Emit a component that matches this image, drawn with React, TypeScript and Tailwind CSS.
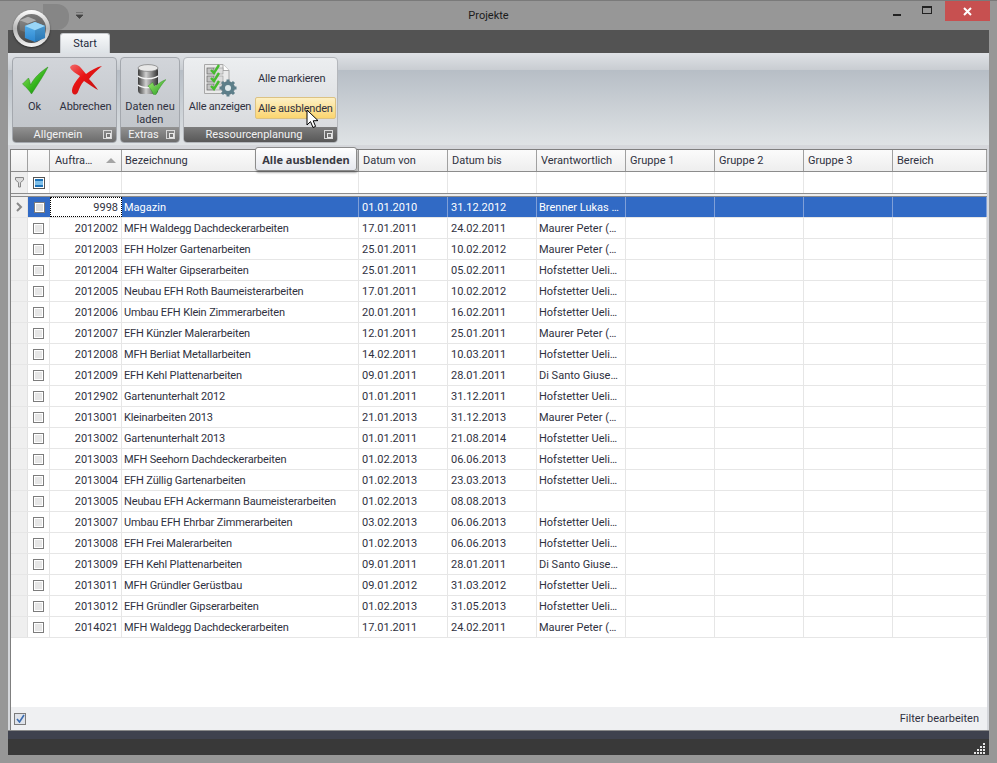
import React from 'react'

const rows = [
  ['2012002', 'MFH Waldegg Dachdeckerarbeiten', '17.01.2011', '24.02.2011', 'Maurer Peter (…'],
  ['2012003', 'EFH Holzer Gartenarbeiten', '25.01.2011', '10.02.2012', 'Maurer Peter (…'],
  ['2012004', 'EFH Walter Gipserarbeiten', '25.01.2011', '05.02.2011', 'Hofstetter Ueli…'],
  ['2012005', 'Neubau EFH Roth Baumeisterarbeiten', '17.01.2011', '10.02.2012', 'Hofstetter Ueli…'],
  ['2012006', 'Umbau EFH Klein Zimmerarbeiten', '20.01.2011', '16.02.2011', 'Hofstetter Ueli…'],
  ['2012007', 'EFH Künzler Malerarbeiten', '12.01.2011', '25.01.2011', 'Maurer Peter (…'],
  ['2012008', 'MFH Berliat Metallarbeiten', '14.02.2011', '10.03.2011', 'Hofstetter Ueli…'],
  ['2012009', 'EFH Kehl Plattenarbeiten', '09.01.2011', '28.01.2011', 'Di Santo Giuse…'],
  ['2012902', 'Gartenunterhalt 2012', '01.01.2011', '31.12.2011', 'Hofstetter Ueli…'],
  ['2013001', 'Kleinarbeiten 2013', '21.01.2013', '31.12.2013', 'Maurer Peter (…'],
  ['2013002', 'Gartenunterhalt 2013', '01.01.2011', '21.08.2014', 'Hofstetter Ueli…'],
  ['2013003', 'MFH Seehorn Dachdeckerarbeiten', '01.02.2013', '06.06.2013', 'Hofstetter Ueli…'],
  ['2013004', 'EFH Züllig Gartenarbeiten', '01.02.2013', '23.03.2013', 'Hofstetter Ueli…'],
  ['2013005', 'Neubau EFH Ackermann Baumeisterarbeiten', '01.02.2013', '08.08.2013', ''],
  ['2013007', 'Umbau EFH Ehrbar Zimmerarbeiten', '03.02.2013', '06.06.2013', 'Hofstetter Ueli…'],
  ['2013008', 'EFH Frei Malerarbeiten', '01.02.2013', '06.06.2013', 'Hofstetter Ueli…'],
  ['2013009', 'EFH Kehl Plattenarbeiten', '09.01.2011', '28.01.2011', 'Di Santo Giuse…'],
  ['2013011', 'MFH Gründler Gerüstbau', '09.01.2012', '31.03.2012', 'Hofstetter Ueli…'],
  ['2013012', 'EFH Gründler Gipserarbeiten', '01.02.2013', '31.05.2013', 'Hofstetter Ueli…'],
  ['2014021', 'MFH Waldegg Dachdeckerarbeiten', '17.01.2011', '24.02.2011', 'Maurer Peter (…'],
]

const gridCols = 'grid grid-cols-[17px_22px_72px_237px_89px_89px_89px_89px_89px_89px_94px]'

function DialogLauncher() {
  return (
    <span className="relative h-[9px] w-[9px] border border-[#d8d8d8]">
      <span className="absolute bottom-0 right-0 h-[5px] w-[5px] border border-[#e8e8e8] bg-[#777]" />
    </span>
  )
}

function RibbonGroup({ title, width, hot, children }: { title: string; width: string; hot?: boolean; children: React.ReactNode }) {
  return (
    <div
      className={`${width} flex flex-col overflow-hidden rounded-[4px] border ${
        hot ? 'border-[#b4b7bc] bg-gradient-to-b from-[#eceef0] to-[#d5d7da]' : 'border-[#a4a8ae] bg-gradient-to-b from-[#d2d5da] to-[#bfc3c8]'
      }`}
    >
      <div className="flex flex-1">{children}</div>
      <div
        className={`flex h-[15px] items-center pr-[4px] text-[#f2f2f2] bg-gradient-to-b ${
          hot ? 'from-[#7c7c7c] to-[#585858]' : 'from-[#929292] to-[#6c6c6c]'
        }`}
      >
        <span className="flex-1 text-center">{title}</span>
        <DialogLauncher />
      </div>
    </div>
  )
}

function CheckMark() {
  return (
    <svg width="34" height="34" viewBox="0 0 34 34" className="ml-[4px]">
      <defs>
        <linearGradient id="tick" x1="0" x2="1" y1="0" y2="1">
          <stop offset="0" stopColor="#9be86a" />
          <stop offset="0.55" stopColor="#35b51c" />
          <stop offset="1" stopColor="#0e7a10" />
        </linearGradient>
      </defs>
      <path d="M2.5 21 L8.5 15 C9.5 17 10 19 10.5 22 C14 15 20 9 28 4 C24 12 18 21 11.5 31 C9 27 6 24 2.5 21Z" fill="url(#tick)" stroke="#2a8a1c" strokeWidth="0.5" />
    </svg>
  )
}

function CrossMark() {
  return (
    <svg width="36" height="34" viewBox="0 0 36 34">
      <defs>
        <linearGradient id="cross" x1="0" x2="1" y1="0" y2="1">
          <stop offset="0" stopColor="#f26a6a" />
          <stop offset="0.4" stopColor="#e81414" />
          <stop offset="1" stopColor="#b80f0f" />
        </linearGradient>
      </defs>
      <path d="M2 4 C5 0 10 1 13 5 L18 11 C23 7 29 4 34 3 C29 7 24 12 21 16 C25 20 28 24 30 27 C26 25 21 21 16 18 C13 21 11 26 10 29 C8 33 4 32 4 28 C4 23 8 18 12 13 C8 10 3 8 2 4Z" fill="url(#cross)" />
    </svg>
  )
}

function DatabaseIcon() {
  return (
    <svg width="32" height="34" viewBox="0 0 32 34">
      <defs>
        <linearGradient id="db" x1="0" x2="1" y1="0" y2="0">
          <stop offset="0" stopColor="#3c3c3c" />
          <stop offset="0.4" stopColor="#d0d0d0" />
          <stop offset="1" stopColor="#333" />
        </linearGradient>
        <linearGradient id="dbtick" x1="0" x2="1" y1="0" y2="1">
          <stop offset="0" stopColor="#a4ea70" />
          <stop offset="1" stopColor="#1f9a1f" />
        </linearGradient>
      </defs>
      <rect x="4" y="4" width="20" height="27" rx="4" fill="url(#db)" />
      <ellipse cx="14" cy="5" rx="10" ry="3.4" fill="#e8e8e8" stroke="#666" strokeWidth="0.6" />
      <path d="M4 13 C8 16.5 20 16.5 24 13 M4 22 C8 25.5 20 25.5 24 22" fill="none" stroke="#f4f4f4" strokeWidth="1.4" />
      <path d="M14 23 L18.5 19.5 L21 24 C24 20.5 28 18 32 16.5 C28 21 24.5 26 22 31.5 L19.5 31.5 C18 28 16 25 14 23Z" fill="url(#dbtick)" stroke="#2a8a1c" strokeWidth="0.4" />
    </svg>
  )
}

function ChecklistIcon() {
  return (
    <svg width="34" height="34" viewBox="0 0 34 34">
      <path d="M1.5 1.5 H20 L26 7.5 V30.5 H1.5Z" fill="#eaeaea" stroke="#a8a8a8" />
      <path d="M20 1.5 V7.5 H26" fill="#fff" stroke="#a8a8a8" />
      {[5, 13, 21].map((y) => (
        <g key={y}>
          <rect x="4" y={y} width="7" height="6" fill="#c4c4c4" stroke="#666" strokeWidth="0.7" />
          <rect x="11" y={y} width="9" height="6" fill="#dcdcdc" stroke="#888" strokeWidth="0.5" />
          <path d={`M8 ${y + 2} l3 3 l5 -8`} fill="none" stroke="#45bb2e" strokeWidth="2.4" />
        </g>
      ))}
      <g transform="translate(25 25)">
        <circle r="6.5" fill="#5d7f8a" stroke="#3b5560" strokeWidth="0.5" />
        <path d="M0 -8.5 V8.5 M-8.5 0 H8.5 M-6 -6 L6 6 M-6 6 L6 -6" stroke="#5d7f8a" strokeWidth="3" />
        <circle r="3" fill="#dfe9ec" />
      </g>
    </svg>
  )
}

function CursorIcon() {
  return (
    <svg width="14" height="20" viewBox="0 0 14 20" className="absolute left-[306px] top-[109px]">
      <path d="M1 1 V16 L4.5 12.6 L7 18.5 L9.6 17.4 L7.2 11.8 L12 11.6Z" fill="#fff" stroke="#000" strokeWidth="1" />
    </svg>
  )
}

function Cube({ className, id, side, top }: { className: string; id: string; side: [string, string]; top: string }) {
  return (
    <svg viewBox="0 0 24 24" className={className}>
      <defs>
        <linearGradient id={id} x1="0" x2="0" y1="0" y2="1">
          <stop offset="0" stopColor={side[0]} />
          <stop offset="1" stopColor={side[1]} />
        </linearGradient>
      </defs>
      <path d="M12 1 L23 5.5 V18.5 L12 23 L1 18.5 V5.5Z" fill={`url(#${id})`} />
      <path d="M12 1 L23 5.5 L12 10 L1 5.5Z" fill={top} />
      <path d="M12 10 L23 5.5 V18.5 L12 23Z" fill="#000" opacity="0.12" />
    </svg>
  )
}

function GridCheckbox({ tone = 'bg-[#e6e6e6]' }: { tone?: string }) {
  return <span className={`h-[11px] w-[11px] border border-[#7c7c7c] ${tone} shadow-[inset_0_0_0_1px_#fff]`} />
}

export default function App() {
  return (
    <div
      className="relative flex h-[763px] w-[997px] flex-col overflow-hidden whitespace-nowrap bg-[#979797] text-[11px] leading-[13px] text-[#2f3140]"
      style={{ fontFamily: 'Roboto, "Noto Sans", sans-serif' }}
    >
      {/* titlebar */}
      <div className="relative flex h-[30px] items-center justify-center border-t border-[#7a7a7a] pr-[20px] text-[#1b1b1b]">
        <span>Projekte</span>
        <div className="absolute right-[7px] top-0 flex h-[20px] items-start">
          <div className="flex h-[20px] w-[30px] items-end justify-center pb-[5px]">
            <span className="h-[2px] w-[8px] bg-[#222]" />
          </div>
          <div className="flex h-[20px] w-[30px] items-center justify-center pb-[2px]">
            <span className="h-[8px] w-[10px] border border-t-[2px] border-[#222]" />
          </div>
          <div className="ml-[3px] flex h-[20px] w-[45px] items-center justify-center bg-[#c75050]">
            <svg width="9" height="9" viewBox="0 0 9 9">
              <path d="M1 1 L8 8 M8 1 L1 8" stroke="#fff" strokeWidth="2" />
            </svg>
          </div>
        </div>
        <div className="absolute left-[43px] top-[3px] h-[26px] w-[26px] rounded-r-[12px] bg-[#868686]" />
        <svg width="7" height="7" viewBox="0 0 7 7" className="absolute left-[76px] top-[11px]">
          <path d="M0 0 H7 M0 3 H7 L3.5 6.5Z" fill="#444" stroke="#444" strokeWidth="0.8" />
        </svg>
      </div>

      <div className="mx-[8px] flex flex-1 flex-col">
        {/* tab strip */}
        <div className="flex h-[23px] items-end bg-[#535353] pl-[52px]">
          <div className="flex h-[20px] w-[50px] items-center justify-center rounded-t-[3px] border border-b-0 border-[#c5c8cc] bg-gradient-to-b from-[#f8f9fa] to-[#dde2e6] text-[#1e2a3a]">
            Start
          </div>
        </div>

        {/* ribbon */}
        <div className="flex h-[92px] gap-[3px] bg-[linear-gradient(#dfe2e6_0%,#c9cdd2_18%,#b7bec6_19%,#dfe3e5_100%)] px-[4px] pb-[2px] pt-[4px]">
          <RibbonGroup title="Allgemein" width="w-[105px]">
            <div className="flex flex-1 pt-[5px] tracking-[-0.1px]">
              <div className="flex w-[43px] flex-col items-center gap-[3px]">
                <CheckMark />
                <span>Ok</span>
              </div>
              <div className="flex w-[59px] flex-col items-center gap-[3px]">
                <CrossMark />
                <span>Abbrechen</span>
              </div>
            </div>
          </RibbonGroup>
          <RibbonGroup title="Extras" width="w-[60px]">
            <div className="flex flex-1 flex-col items-center pt-[5px] text-center">
              <DatabaseIcon />
              <span className="mt-[3px]">Daten neu</span>
              <span>laden</span>
            </div>
          </RibbonGroup>
          <RibbonGroup title="Ressourcenplanung" width="w-[155px]" hot>
            <div className="flex flex-1 pl-[3px] pt-[5px] tracking-[-0.2px]">
              <div className="flex w-[66px] flex-col items-center gap-[3px]">
                <ChecklistIcon />
                <span>Alle anzeigen</span>
              </div>
              <div className="flex flex-1 flex-col gap-[8px] pt-[4px]">
                <div className="flex h-[22px] items-center pl-[5px]">Alle markieren</div>
                <div className="ml-[2px] flex h-[22px] w-[81px] items-center rounded-[2px] border border-[#dcc283] bg-gradient-to-b from-[#fdf0c4] to-[#fbd56e] pl-[2px]">
                  Alle ausblenden
                </div>
              </div>
            </div>
          </RibbonGroup>
        </div>

        {/* grid */}
        <div className="flex flex-1 flex-col bg-[#d5d7db] pt-[4px]">
          <div className="mx-[2px] flex flex-1 flex-col border-l border-t border-[#7f7f7f] bg-white">
            <div className={`${gridCols} h-[22px] border-b border-[#8c8c8c] bg-gradient-to-b from-[#fbfbfb] to-[#eeeeee]`}>
              <div className="border-r border-[#a0a0a0]" />
              <div className="border-r border-[#a0a0a0]" />
              <div className="flex items-center justify-between border-r border-[#a0a0a0] px-[5px]">
                <span>Auftra…</span>
                <span className="h-0 w-0 border-x-[5px] border-b-[5px] border-x-transparent border-b-[#a5a5a5]" />
              </div>
              {['Bezeichnung', 'Datum von', 'Datum bis', 'Verantwortlich', 'Gruppe 1', 'Gruppe 2', 'Gruppe 3', 'Bereich'].map((h, i) => (
                <div key={h} className={`flex items-center border-r border-[#a0a0a0] ${i === 0 ? 'pl-[3px]' : 'pl-[4px]'}`}>
                  {h}
                </div>
              ))}
            </div>
            <div className={`${gridCols} h-[21px]`}>
              <div className="flex items-center justify-center border-r border-[#e2e2e2] bg-[#efefef]">
                <svg width="9" height="11" viewBox="0 0 9 11">
                  <path d="M0.5 0.5 H8.5 V3 L5.5 5.5 V10 H3.5 V5.5 L0.5 3Z" fill="#ddd" stroke="#888" />
                </svg>
              </div>
              <div className="flex items-center justify-center border-r border-[#e6e6e6]">
                <span className="flex h-[12px] w-[12px] items-center justify-center border border-[#555] bg-white">
                  <span className="h-[8px] w-[8px] border-y-[2px] border-[#1e73b8] bg-[#7fc0ea]" />
                </span>
              </div>
              {Array.from({ length: 9 }).map((_, i) => (
                <div key={i} className="border-r border-[#e6e6e6]" />
              ))}
            </div>
            <div className="h-[4px] border-y border-[#8c8c8c] bg-[#ececec]" />

            <div className={`${gridCols} h-[21px] border-b border-[#e6e6e6]`}>
              <div className="flex items-center justify-center border-r border-[#e2e2e2] bg-[#efefef]">
                <svg width="7" height="10" viewBox="0 0 7 10">
                  <path d="M1 1 L5 5 L1 9" fill="none" stroke="#888" strokeWidth="2" />
                </svg>
              </div>
              <div className="flex items-center justify-center bg-[#316ac5]">
                <GridCheckbox tone="bg-[#dcdcdc]" />
              </div>
              <div className="flex items-center justify-end border border-dotted border-black pr-[3px]">9998</div>
              {['Magazin', '01.01.2010', '31.12.2012', 'Brenner Lukas …', '', '', '', ''].map((c, i) => (
                <div key={i} className={`flex items-center border-r border-[#7f9fd8] bg-[#316ac5] text-white ${i === 0 || i === 3 ? 'pl-[2px]' : 'pl-[3px]'}`}>
                  {c}
                </div>
              ))}
            </div>
            {rows.map((r) => (
              <div key={r[0]} className={`${gridCols} h-[21px] border-b border-[#e6e6e6]`}>
                <div className="border-r border-[#e2e2e2] bg-[#efefef]" />
                <div className="flex items-center justify-center border-r border-[#e6e6e6]">
                  <GridCheckbox />
                </div>
                <div className="flex items-center justify-end border-r border-[#e6e6e6] pr-[3px]">{r[0]}</div>
                {r.slice(1).map((c, i) => (
                  <div
                    key={i}
                    className={`flex items-center border-r border-[#e6e6e6] ${i === 0 ? 'pl-[2px] tracking-[-0.15px]' : i === 3 ? 'pl-[2px]' : 'pl-[3px]'}`}
                  >
                    {c}
                  </div>
                ))}
                {[0, 1, 2, 3].map((i) => (
                  <div key={i} className="border-r border-[#e6e6e6]" />
                ))}
              </div>
            ))}
            <div className="flex-1" />
            <div className="flex h-[23px] items-center justify-between bg-[#eff0f2] pl-[3px] pr-[8px]">
              <span className="flex h-[12px] w-[12px] items-center justify-center border border-[#7c7c7c] bg-[#dfe3ea]">
                <svg width="9" height="9" viewBox="0 0 9 9">
                  <path d="M1 5 L3.5 8 L8 1" fill="none" stroke="#3b6cb0" strokeWidth="1.6" />
                </svg>
              </span>
              <span>Filter bearbeiten</span>
            </div>
          </div>
        </div>

        {/* status bar */}
        <div className="flex h-[25px] flex-col border-t border-[#8a8a8a]">
          <div className="h-[8px] bg-[#3f424e]" />
          <div className="relative flex-1 bg-[#393939]">
            <svg width="12" height="12" viewBox="0 0 12 12" className="absolute bottom-[1px] right-[3px]">
              {[[9, 1], [6, 4], [9, 4], [3, 7], [6, 7], [9, 7], [0, 10], [3, 10], [6, 10], [9, 10]].map(([x, y]) => (
                <rect key={`${x}-${y}`} x={x} y={y} width="2" height="2" fill="#e6e6e6" />
              ))}
            </svg>
          </div>
        </div>
      </div>
      <div className="h-[8px]" />

      {/* app button */}
      <div className="absolute left-[13px] top-[10px] flex h-[37px] w-[37px] items-center justify-center rounded-full bg-gradient-to-b from-[#ffffff] via-[#b8b8b8] to-[#f4f4f4] shadow-[0_1px_2px_rgba(0,0,0,0.5)]">
        <div className="relative h-[29px] w-[29px] rounded-full bg-gradient-to-b from-[#7a7a7a] to-[#4a4a4a]">
          <Cube className="absolute left-[2px] top-[2px] h-[18px] w-[18px]" id="cube-grey" side={['#8a8a8a', '#6a6a6a']} top="#adadad" />
          <Cube className="absolute bottom-0 right-0 h-[22px] w-[22px]" id="cube-blue" side={['#5db4ee', '#2c86cf']} top="#9ad6f7" />
        </div>
      </div>

      {/* tooltip */}
      <div
        className="absolute left-[255px] top-[147px] flex h-[24px] w-[102px] items-center justify-center rounded-[3px] border border-[#8c8c8c] bg-gradient-to-b from-white to-[#e6e8ee] font-bold text-[#3a3a44] shadow-[1px_2px_2px_rgba(0,0,0,0.3)]"
        style={{ fontFamily: '"Noto Sans", sans-serif' }}
      >
        Alle ausblenden
      </div>
      <CursorIcon />
    </div>
  )
}
